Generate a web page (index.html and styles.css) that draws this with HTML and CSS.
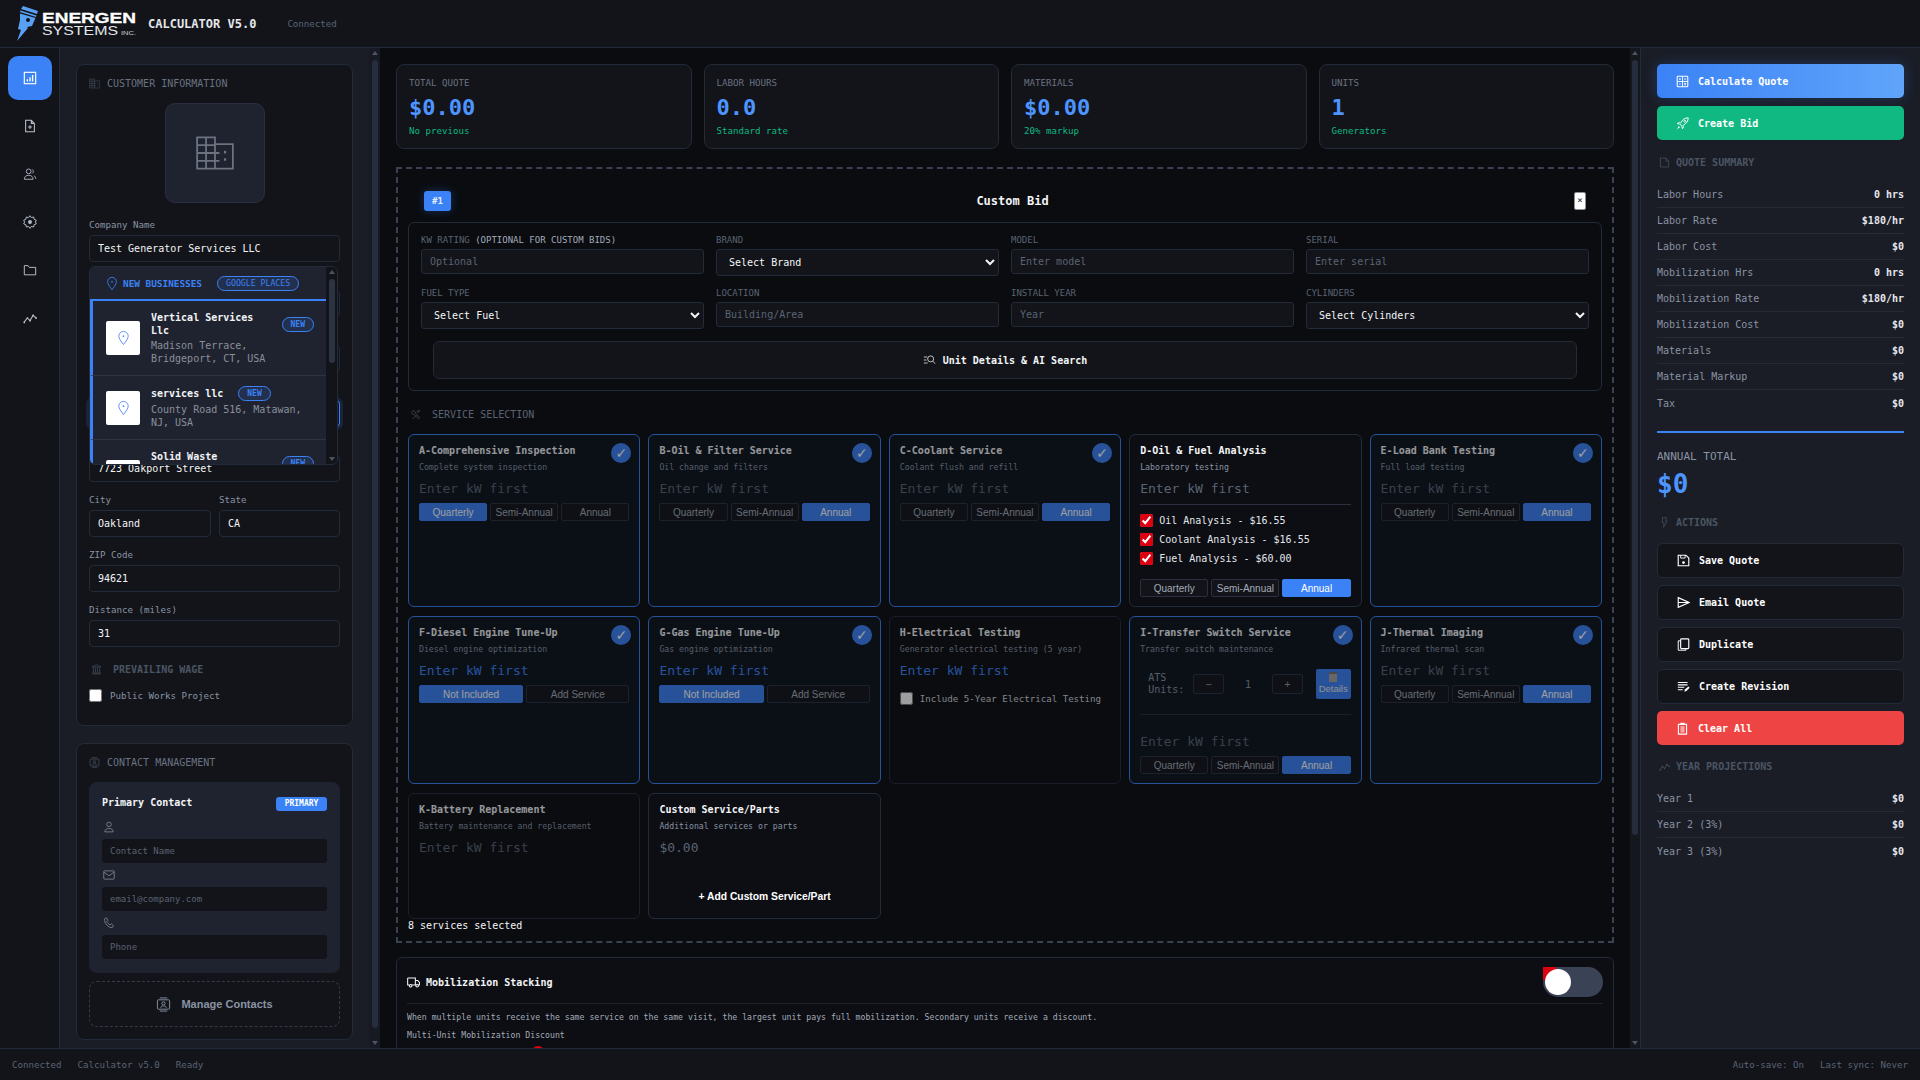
FILE: index.html
```html
<!DOCTYPE html>
<html lang="en">
<head>
<meta charset="utf-8">
<title>Energen Systems Calculator V5.0</title>
<link rel="stylesheet" href="styles.css">
</head>
<body>
<svg class="sprite" xmlns="http://www.w3.org/2000/svg">
  <symbol id="i-chart" viewBox="0 0 16 16"><rect x="1.5" y="1.5" width="13" height="13" stroke-width="1.3"/><path d="M5 12V9.5M8 12V7M11 12V4.5" stroke-width="1.6"/></symbol>
  <symbol id="i-file-plus" viewBox="0 0 16 16"><path d="M3 1.5h6.5l3.500 3.500v9.500H3zM9.500 1.500V5H13M8 7v4.500M5.800 9.200h4.400" stroke-width="1.200"/></symbol>
  <symbol id="i-people" viewBox="0 0 16 16"><circle cx="6.500" cy="5" r="2.700"/><path d="M1.500 14c0-3 2-4.500 5-4.500s5 1.500 5 4.500zM10.500 2.800a2.700 2.700 0 0 1 0 4.600M12.500 10c1.300.6 2 1.800 2 3.500"/></symbol>
  <symbol id="i-gear" viewBox="0 0 16 16"><path d="M8 .8l1.600 2.100 2.600-.6.500 2.600 2.500 1-1 2.100 1 2.100-2.500 1-.5 2.600-2.600-.6L8 15.200l-1.600-2.100-2.600.6-.5-2.600-2.500-1 1-2.100-1-2.100 2.500-1 .5-2.600 2.600.6z" stroke-width="1.100"/><circle cx="8" cy="8" r="2.200" class="solid"/></symbol>
  <symbol id="i-folder" viewBox="0 0 16 16"><path d="M1.500 13.500V3h4.300l1.500 2h7.200v8.500z" stroke-width="1.100"/></symbol>
  <symbol id="i-graph" viewBox="0 0 16 16"><path d="M1 13l4-5 3 3 3.500-6 3.500 3" stroke-width="1.200"/><g class="solid"><circle cx="1.500" cy="13" r="1"/><circle cx="5" cy="8" r="1"/><circle cx="8" cy="11" r="1"/><circle cx="11.500" cy="5" r="1"/><circle cx="15" cy="8" r="1"/></g></symbol>
  <symbol id="i-building" viewBox="0 0 17 15"><path d="M.5 14.500V.5h8v14zM8.500 3.500h8v11h-8M4.500.5v14M.5 4h8M.5 7.500h8M.5 11h8M8.500 7.500h2M8.500 11h2" stroke-width=".8"/><path d="M13 6.500v1.200M13 9.800V11" stroke-width="1"/></symbol>
  <symbol id="i-pin" viewBox="0 0 16 16"><path d="M8 15C5 11 3 8.500 3 6a5 5 0 0 1 10 0c0 2.500-2 5-5 9z"/><circle cx="8" cy="6" r="1" class="solid"/></symbol>
  <symbol id="i-bank" viewBox="0 0 16 16"><path d="M8 1l6.500 3.500h-13zM2 14.500h12M1.500 13h13M3.500 6v6M6.500 6v6M9.500 6v6M12.500 6v6"/></symbol>
  <symbol id="i-badge" viewBox="0 0 16 16"><rect x="1.500" y="3" width="13" height="10" rx="1"/><circle cx="8" cy="6.800" r="1.700"/><path d="M5 11.500c.3-1.500 1.400-2 3-2s2.700.5 3 2M4 1h8M4 15h8"/></symbol>
  <symbol id="i-person" viewBox="0 0 16 16"><circle cx="8" cy="4.500" r="3"/><path d="M2.500 14.500c0-3.500 2.500-4.500 5.500-4.500s5.500 1 5.500 4.500z"/></symbol>
  <symbol id="i-mail" viewBox="0 0 16 16"><rect x="1" y="2.500" width="14" height="11" rx="1"/><path d="M1 4l7 5 7-5"/></symbol>
  <symbol id="i-phone" viewBox="0 0 16 16"><path d="M2 2.500L4.500 1l2 3.500-1.500 1.500c.8 2 2.500 3.700 4.500 4.500l1.500-1.500 3 2.500-1.500 2.500C7.500 15 1.500 8.500 2 2.500z"/></symbol>
  <symbol id="i-searchlines" viewBox="0 0 16 16"><path d="M.5 4h4.500M.5 8h3.500M.5 12h5"/><circle cx="9.500" cy="6.500" r="4"/><path d="M12.500 9.500l3 3.500"/></symbol>
  <symbol id="i-tools" viewBox="0 0 16 16"><path d="M2 5.500L5 2l3 2.500-.8 1 6.800 7-1.800 1.800-6.800-7-1 .8z"/><path d="M9 9.500l-5 5M11 2.500c1-1 2.500-1 3.500 0L12 5l-1.500-.5z"/></symbol>
  <symbol id="i-truck" viewBox="0 0 16 16"><path d="M.8 2.500h9.500v8.500H6M3 11H.8V2.500M10.300 5.500h3l2 2.500v3h-1.500M10.300 11h1" stroke-width="1.300"/><circle cx="4.500" cy="12" r="1.600" stroke-width="1.300"/><circle cx="12.500" cy="12" r="1.600" stroke-width="1.300"/></symbol>
  <symbol id="i-calc" viewBox="0 0 16 16"><rect x="1.500" y="1.500" width="13" height="13" rx="1" stroke-width="1.300"/><path d="M8 1.500v13M1.500 8h13M3.800 5h2M4.800 4v2M10 5h2.500M3.800 11h2M10 10.300h2.500M10 12h2.500" stroke-width="1.100"/></symbol>
  <symbol id="i-rocket" viewBox="0 0 16 16"><path d="M15 1c-4 0-7 2-9 6L4.500 8.500l3 3L9 10c4-2 6-5 6-9z" stroke-width="1.200"/><path d="M4.500 6.500L1.500 8l2.500.8M9.500 11.500L8 14.500l-.8-2.500" stroke-width="1.200"/><circle cx="10.800" cy="5.200" r="1.200"/><path d="M3.500 11L1 15l4-2.500" class="solid"/></symbol>
  <symbol id="i-note" viewBox="0 0 16 16"><path d="M2 1.500h8l4 4v9H2zM10 1.500V6h4M2 4h1M2 8h1M2 12h1"/></symbol>
  <symbol id="i-bolt" viewBox="0 0 16 16"><path d="M5 1h6L9.500 5.500H12L6.500 15l1-6.500H5z"/></symbol>
  <symbol id="i-save" viewBox="0 0 16 16"><path d="M1.500 1.500H11l3.500 3.500v9.500h-13z" stroke-width="1.400"/><path d="M4.500 1.500V5h5.500V1.500" stroke-width="1.100"/><circle cx="8" cy="10.500" r="1.700" class="solid"/></symbol>
  <symbol id="i-send" viewBox="0 0 16 16"><path d="M1.500 2L15 8 1.500 14zM1.500 8H15" stroke-width="1.400"/></symbol>
  <symbol id="i-copy" viewBox="0 0 16 16"><rect x="4.500" y="1" width="10" height="12" rx="1" stroke-width="1.400"/><path d="M4.500 3.500H1.500v11.500H11v-2" stroke-width="1.200"/></symbol>
  <symbol id="i-revise" viewBox="0 0 16 16"><path d="M1 3h12M1 6h12M1 9h8M1 12h6" stroke-width="1.300"/><path d="M9 14.500l1-3 4-3.500 1.500 1.500-4 4z" class="solid"/></symbol>
  <symbol id="i-clip" viewBox="0 0 16 16"><path d="M3 3h10v12H3zM6 3V1.500h4V3" stroke-width="1.400"/><rect x="5.500" y="5" width="5" height="8" class="pink"/></symbol>
</svg>

<header class="topbar">
  <svg class="logo" viewBox="16 6 122 36" width="122" height="36" aria-label="Energen Systems Inc.">
    <g fill="#5aa0f2">
      <path d="M23 6l15 5-1 3-16-5z"/>
      <path d="M20.500 10.500l16 5-.5 1.500-16-5z"/>
      <path d="M20 13.500l15.500 4.500-3.500 8-5 1 1 1-11 13 4-11-3-1 2-9z"/>
    </g>
    <circle cx="28" cy="20" r="2" fill="#12141a"/>
    <text x="42" y="23" class="logo-main" textLength="94" lengthAdjust="spacingAndGlyphs">ENERGEN</text>
    <text x="42" y="35" class="logo-sub" textLength="76" lengthAdjust="spacingAndGlyphs">SYSTEMS</text>
    <text x="121" y="35" class="logo-inc" textLength="15" lengthAdjust="spacingAndGlyphs">INC.</text>
  </svg>
  <h1 class="app-title">CALCULATOR V5.0</h1>
  <span class="status-text">Connected</span>
</header>

<div class="workspace">
  <nav class="sidebar">
    <a class="nav-btn nav-btn--active"><svg class="ic ic-nav"><use href="#i-chart"/></svg></a>
    <a class="nav-btn"><svg class="ic ic-nav"><use href="#i-file-plus"/></svg></a>
    <a class="nav-btn"><svg class="ic ic-nav"><use href="#i-people"/></svg></a>
    <a class="nav-btn"><svg class="ic ic-nav"><use href="#i-gear"/></svg></a>
    <a class="nav-btn"><svg class="ic ic-nav"><use href="#i-folder"/></svg></a>
    <a class="nav-btn"><svg class="ic ic-nav"><use href="#i-graph"/></svg></a>
  </nav>

  <aside class="left">
    <div class="left-scroll">
      <section class="card">
        <div class="sec-title sec-title--card"><svg class="ic ic-sec"><use href="#i-building"/></svg>CUSTOMER INFORMATION</div>
        <div class="logo-box"><svg class="ic ic-big"><use href="#i-building"/></svg></div>

        <div class="field field--drop">
          <label class="lbl">Company Name</label>
          <input class="inp" value="Test Generator Services LLC">
          <div class="drop">
            <div class="drop-body">
              <div class="drop-head">
                <svg class="ic ic-drop"><use href="#i-pin"/></svg>
                <span class="drop-head-t">NEW BUSINESSES</span>
                <span class="pill pill--google">GOOGLE PLACES</span>
              </div>
              <div class="drop-item">
                <span class="drop-ico"><svg class="ic ic-pin"><use href="#i-pin"/></svg></span>
                <div class="drop-text">
                  <div class="drop-line"><strong class="drop-name">Vertical Services Llc</strong><span class="pill">NEW</span></div>
                  <div class="drop-addr">Madison Terrace, Bridgeport, CT, USA</div>
                </div>
              </div>
              <div class="drop-item">
                <span class="drop-ico"><svg class="ic ic-pin"><use href="#i-pin"/></svg></span>
                <div class="drop-text">
                  <div class="drop-line"><strong class="drop-name">services llc</strong><span class="pill">NEW</span></div>
                  <div class="drop-addr">County Road 516, Matawan, NJ, USA</div>
                </div>
              </div>
              <div class="drop-item">
                <span class="drop-ico"><svg class="ic ic-pin"><use href="#i-pin"/></svg></span>
                <div class="drop-text">
                  <div class="drop-line"><strong class="drop-name">Solid Waste Services</strong><span class="pill">NEW</span></div>
                  <div class="drop-addr">Main Street, Oakland, CA, USA</div>
                </div>
              </div>
            </div>
            <div class="vscroll vscroll--drop"><i class="arr arr--up"></i><b class="thumb thumb--drop"></b><i class="arr arr--down"></i></div>
          </div>
        </div>
        <div class="field"><label class="lbl">Contact</label><input class="inp"></div>
        <div class="field"><label class="lbl">Email</label><input class="inp"></div>
        <div class="field"><label class="lbl">Phone</label><input class="inp inp--focus"></div>
        <div class="field"><label class="lbl">Address</label><input class="inp" value="7723 Oakport Street"></div>
        <div class="field-row">
          <div class="field"><label class="lbl">City</label><input class="inp" value="Oakland"></div>
          <div class="field"><label class="lbl">State</label><input class="inp" value="CA"></div>
        </div>
        <div class="field"><label class="lbl">ZIP Code</label><input class="inp" value="94621"></div>
        <div class="field"><label class="lbl">Distance (miles)</label><input class="inp" value="31"></div>
        <div class="sec-title sec-title--wage"><svg class="ic ic-sec"><use href="#i-bank"/></svg>PREVAILING WAGE</div>
        <label class="check-line"><input type="checkbox" class="chk">Public Works Project</label>
      </section>

      <section class="card card--contacts">
        <div class="sec-title sec-title--card"><svg class="ic ic-sec"><use href="#i-badge"/></svg>CONTACT MANAGEMENT</div>
        <div class="contact">
          <div class="contact-head"><strong>Primary Contact</strong><span class="primary-tag">PRIMARY</span></div>
          <svg class="ic ic-contact"><use href="#i-person"/></svg>
          <input class="inp2" placeholder="Contact Name">
          <svg class="ic ic-contact"><use href="#i-mail"/></svg>
          <input class="inp2" placeholder="email@company.com">
          <svg class="ic ic-contact"><use href="#i-phone"/></svg>
          <input class="inp2" placeholder="Phone">
        </div>
        <button class="manage"><svg class="ic ic-manage"><use href="#i-badge"/></svg>Manage Contacts</button>
      </section>
    </div>
    <div class="vscroll vscroll--left"><i class="arr arr--up"></i><b class="thumb thumb--left"></b><i class="arr arr--down"></i></div>
  </aside>

  <main class="main">
    <div class="main-scroll">
      <div class="stats">
        <div class="stat"><div class="stat-l">TOTAL QUOTE</div><div class="stat-v">$0.00</div><div class="stat-s">No previous</div></div>
        <div class="stat"><div class="stat-l">LABOR HOURS</div><div class="stat-v">0.0</div><div class="stat-s">Standard rate</div></div>
        <div class="stat"><div class="stat-l">MATERIALS</div><div class="stat-v">$0.00</div><div class="stat-s">20% markup</div></div>
        <div class="stat"><div class="stat-l">UNITS</div><div class="stat-v">1</div><div class="stat-s">Generators</div></div>
      </div>

      <section class="bid">
        <div class="bid-head">
          <span class="bid-no">#1</span>
          <strong class="bid-title">Custom Bid</strong>
          <button class="bid-x">×</button>
        </div>
        <div class="unit">
          <div class="unit-grid">
            <div><label class="ulbl">KW RATING <span class="ulbl-hi">(OPTIONAL FOR CUSTOM BIDS)</span></label><input class="uinp" placeholder="Optional"></div>
            <div><label class="ulbl">BRAND</label><select class="usel"><option>Select Brand</option></select></div>
            <div><label class="ulbl">MODEL</label><input class="uinp" placeholder="Enter model"></div>
            <div><label class="ulbl">SERIAL</label><input class="uinp" placeholder="Enter serial"></div>
            <div><label class="ulbl">FUEL TYPE</label><select class="usel"><option>Select Fuel</option></select></div>
            <div><label class="ulbl">LOCATION</label><input class="uinp" placeholder="Building/Area"></div>
            <div><label class="ulbl">INSTALL YEAR</label><input class="uinp" placeholder="Year"></div>
            <div><label class="ulbl">CYLINDERS</label><select class="usel"><option>Select Cylinders</option></select></div>
          </div>
          <button class="ai-btn"><svg class="ic ic-ai"><use href="#i-searchlines"/></svg>Unit Details &amp; AI Search</button>
        </div>

        <div class="sec-title sec-title--svc"><svg class="ic ic-sec"><use href="#i-tools"/></svg>SERVICE SELECTION</div>

        <div class="svc-grid">
          <article class="svc svc--on">
            <span class="tick">✓</span>
            <h3 class="svc-t">A-Comprehensive Inspection</h3>
            <p class="svc-d">Complete system inspection</p>
            <div class="svc-p">Enter kW first</div>
            <div class="periods"><button class="per per--on">Quarterly</button><button class="per">Semi-Annual</button><button class="per">Annual</button></div>
          </article>
          <article class="svc svc--on">
            <span class="tick">✓</span>
            <h3 class="svc-t">B-Oil &amp; Filter Service</h3>
            <p class="svc-d">Oil change and filters</p>
            <div class="svc-p">Enter kW first</div>
            <div class="periods"><button class="per">Quarterly</button><button class="per">Semi-Annual</button><button class="per per--on">Annual</button></div>
          </article>
          <article class="svc svc--on">
            <span class="tick">✓</span>
            <h3 class="svc-t">C-Coolant Service</h3>
            <p class="svc-d">Coolant flush and refill</p>
            <div class="svc-p">Enter kW first</div>
            <div class="periods"><button class="per">Quarterly</button><button class="per">Semi-Annual</button><button class="per per--on">Annual</button></div>
          </article>
          <article class="svc svc--plain">
            <h3 class="svc-t">D-Oil &amp; Fuel Analysis</h3>
            <p class="svc-d">Laboratory testing</p>
            <div class="svc-p">Enter kW first</div>
            <div class="fluids">
              <label class="fluid"><input type="checkbox" class="chk chk--red" checked>Oil Analysis - $16.55</label>
              <label class="fluid"><input type="checkbox" class="chk chk--red" checked>Coolant Analysis - $16.55</label>
              <label class="fluid"><input type="checkbox" class="chk chk--red" checked>Fuel Analysis - $60.00</label>
            </div>
            <div class="periods"><button class="per">Quarterly</button><button class="per">Semi-Annual</button><button class="per per--on">Annual</button></div>
          </article>
          <article class="svc svc--on">
            <span class="tick">✓</span>
            <h3 class="svc-t">E-Load Bank Testing</h3>
            <p class="svc-d">Full load testing</p>
            <div class="svc-p">Enter kW first</div>
            <div class="periods"><button class="per">Quarterly</button><button class="per">Semi-Annual</button><button class="per per--on">Annual</button></div>
          </article>

          <article class="svc svc--on">
            <span class="tick">✓</span>
            <h3 class="svc-t">F-Diesel Engine Tune-Up</h3>
            <p class="svc-d">Diesel engine optimization</p>
            <div class="svc-p svc-p--blue">Enter kW first</div>
            <div class="periods periods--two"><button class="per per--on">Not Included</button><button class="per">Add Service</button></div>
          </article>
          <article class="svc svc--on">
            <span class="tick">✓</span>
            <h3 class="svc-t">G-Gas Engine Tune-Up</h3>
            <p class="svc-d">Gas engine optimization</p>
            <div class="svc-p svc-p--blue">Enter kW first</div>
            <div class="periods periods--two"><button class="per per--on">Not Included</button><button class="per">Add Service</button></div>
          </article>
          <article class="svc svc--off">
            <h3 class="svc-t">H-Electrical Testing</h3>
            <p class="svc-d">Generator electrical testing (5 year)</p>
            <div class="svc-p svc-p--blue">Enter kW first</div>
            <label class="five"><input type="checkbox" class="chk">Include 5-Year Electrical Testing</label>
          </article>
          <article class="svc svc--on">
            <span class="tick">✓</span>
            <h3 class="svc-t">I-Transfer Switch Service</h3>
            <p class="svc-d">Transfer switch maintenance</p>
            <div class="ats">
              <span class="ats-l">ATS Units:</span>
              <button class="ats-b">−</button>
              <span class="ats-n">1</span>
              <button class="ats-b">+</button>
              <button class="ats-d"><span class="ats-clip"></span>Details</button>
            </div>
            <div class="svc-p svc-p--ats">Enter kW first</div>
            <div class="periods"><button class="per">Quarterly</button><button class="per">Semi-Annual</button><button class="per per--on">Annual</button></div>
          </article>
          <article class="svc svc--on">
            <span class="tick">✓</span>
            <h3 class="svc-t">J-Thermal Imaging</h3>
            <p class="svc-d">Infrared thermal scan</p>
            <div class="svc-p">Enter kW first</div>
            <div class="periods"><button class="per">Quarterly</button><button class="per">Semi-Annual</button><button class="per per--on">Annual</button></div>
          </article>

          <article class="svc svc--off">
            <h3 class="svc-t">K-Battery Replacement</h3>
            <p class="svc-d">Battery maintenance and replacement</p>
            <div class="svc-p">Enter kW first</div>
          </article>
          <article class="svc svc--plain">
            <h3 class="svc-t">Custom Service/Parts</h3>
            <p class="svc-d">Additional services or parts</p>
            <div class="svc-p">$0.00</div>
            <button class="add-custom">+ Add Custom Service/Part</button>
          </article>
        </div>
        <div class="svc-count">8 services selected</div>
      </section>

      <section class="mob">
        <div class="mob-head">
          <div class="mob-title"><svg class="ic ic-truck"><use href="#i-truck"/></svg>Mobilization Stacking</div>
          <div class="toggle"><i class="toggle-chk"></i><i class="toggle-knob"></i></div>
        </div>
        <p class="mob-txt">When multiple units receive the same service on the same visit, the largest unit pays full mobilization. Secondary units receive a discount.</p>
        <p class="mob-txt mob-txt--l">Multi-Unit Mobilization Discount</p>
        <div class="mob-slider"><i class="mob-thumb"></i></div>
      </section>
    </div>
    <div class="vscroll vscroll--main"><i class="arr arr--up"></i><b class="thumb thumb--main"></b><i class="arr arr--down"></i></div>
  </main>

  <aside class="right">
    <button class="rbtn rbtn--calc"><svg class="ic ic-btn"><use href="#i-calc"/></svg>Calculate Quote</button>
    <button class="rbtn rbtn--bid"><svg class="ic ic-btn"><use href="#i-rocket"/></svg>Create Bid</button>

    <div class="sec-title sec-title--r"><svg class="ic ic-sec"><use href="#i-note"/></svg>QUOTE SUMMARY</div>
    <dl class="rows">
      <div class="row"><dt>Labor Hours</dt><dd>0 hrs</dd></div>
      <div class="row"><dt>Labor Rate</dt><dd>$180/hr</dd></div>
      <div class="row"><dt>Labor Cost</dt><dd>$0</dd></div>
      <div class="row"><dt>Mobilization Hrs</dt><dd>0 hrs</dd></div>
      <div class="row"><dt>Mobilization Rate</dt><dd>$180/hr</dd></div>
      <div class="row"><dt>Mobilization Cost</dt><dd>$0</dd></div>
      <div class="row"><dt>Materials</dt><dd>$0</dd></div>
      <div class="row"><dt>Material Markup</dt><dd>$0</dd></div>
      <div class="row"><dt>Tax</dt><dd>$0</dd></div>
    </dl>
    <div class="total">
      <div class="total-l">ANNUAL TOTAL</div>
      <div class="total-v">$0</div>
    </div>

    <div class="sec-title sec-title--r2"><svg class="ic ic-sec"><use href="#i-bolt"/></svg>ACTIONS</div>
    <div class="actions">
      <button class="act"><svg class="ic ic-btn"><use href="#i-save"/></svg>Save Quote</button>
      <button class="act"><svg class="ic ic-btn"><use href="#i-send"/></svg>Email Quote</button>
      <button class="act"><svg class="ic ic-btn"><use href="#i-copy"/></svg>Duplicate</button>
      <button class="act"><svg class="ic ic-btn"><use href="#i-revise"/></svg>Create Revision</button>
      <button class="rbtn rbtn--clear"><svg class="ic ic-btn"><use href="#i-clip"/></svg>Clear All</button>
    </div>

    <div class="sec-title sec-title--r3"><svg class="ic ic-sec"><use href="#i-graph"/></svg>YEAR PROJECTIONS</div>
    <dl class="rows">
      <div class="row"><dt>Year 1</dt><dd>$0</dd></div>
      <div class="row"><dt>Year 2 (3%)</dt><dd>$0</dd></div>
      <div class="row"><dt>Year 3 (3%)</dt><dd>$0</dd></div>
    </dl>
  </aside>
</div>

<footer class="foot">
  <div class="foot-side"><span>Connected</span><span>Calculator v5.0</span><span>Ready</span></div>
  <div class="foot-side"><span>Auto-save: On</span><span>Last sync: Never</span></div>
</footer>
</body>
</html>
```
FILE: styles.css
```css
* { box-sizing: border-box; }
html, body { margin: 0; height: 100%; }
body {
  height: 100vh;
  display: flex;
  flex-direction: column;
  overflow: hidden;
  background: #0a0c10;
  color: #f3f4f6;
  font-family: "DejaVu Sans Mono", "Liberation Mono", monospace;
  font-size: 10px;
}
button, input, select { font-family: inherit; }
.sprite { position: absolute; width: 0; height: 0; }

/* icons */
.ic { fill: none; stroke: currentColor; stroke-width: 1; flex: none; display: block; }
.solid { fill: currentColor; stroke: none; }
.pink { fill: #fca5a5; stroke: none; }
.ic-nav { width: 14px; height: 14px; color: #b8bec9; }
.ic-sec { width: 11px; height: 11px; color: #4b5563; }
.ic-big { width: 38px; height: 34px; color: #6b7280; }
.ic-drop { width: 14px; height: 15px; color: #3b82f6; }
.ic-pin { width: 15px; height: 16px; color: #5b8df6; }
.ic-contact { width: 12px; height: 12px; color: #8a93a3; margin-left: 1px; }
.ic-manage { width: 15px; height: 15px; }
.ic-ai { width: 13px; height: 12px; }
.ic-truck { width: 13px; height: 13px; }
.ic-btn { width: 13px; height: 13px; }

/* top bar */
.topbar {
  height: 48px;
  flex: none;
  display: flex;
  align-items: center;
  padding-left: 16px;
  background: #12141a;
  border-bottom: 1px solid #232a38;
}
.logo { flex: none; margin-top: 1px; }
.logo-main { font: bold 14px "Liberation Sans", sans-serif; fill: #fff; stroke: #fff; stroke-width: .3px; }
.logo-sub { font: 12px "Liberation Sans", sans-serif; fill: #e5e7eb; }
.logo-inc { font: 6px "Liberation Sans", sans-serif; fill: #d1d5db; }
.app-title { margin: 0 0 0 10px; font-size: 12px; font-weight: bold; color: #e5e7eb; }
.status-text { margin-left: 31px; font-size: 9.150px; color: #5b6372; }

.workspace { flex: 1; min-height: 0; display: flex; }

/* sidebar */
.sidebar {
  width: 60px;
  flex: none;
  padding: 8px 8px;
  display: flex;
  flex-direction: column;
  gap: 4px;
  background: #12141a;
  border-right: 1px solid #232a38;
}
.nav-btn {
  width: 44px;
  height: 44px;
  border-radius: 10px;
  display: flex;
  align-items: center;
  justify-content: center;
}
.nav-btn--active { background: #3b82f6; }
.nav-btn--active .ic-nav { color: #fff; }

/* left panel */
.left { width: 320px; flex: none; display: flex; background: #1a1d26; }
.left-scroll { flex: 1; min-width: 0; overflow: hidden; padding: 16px; }
.card {
  background: #12141a;
  border: 1px solid #232a38;
  border-radius: 8px;
  padding: 12px;
}
.card--contacts { margin-top: 17px; }
.sec-title {
  height: 14px;
  margin-bottom: 12px;
  display: flex;
  align-items: center;
  gap: 6px;
  font-size: 10px;
  font-weight: bold;
  color: #4b5563;
  white-space: nowrap;
}
.sec-title--card { font-weight: normal; color: #6b7280; gap: 7px; margin-top: -1px; margin-bottom: 13px; }
.logo-box {
  width: 100px;
  height: 100px;
  margin: 0 auto 16px;
  border-radius: 10px;
  background: #1f2330;
  border: 1px solid #2a3040;
  display: flex;
  align-items: center;
  justify-content: center;
}
.field { margin-bottom: 12px; min-width: 0; }
.field--drop { position: relative; }
.lbl { display: block; height: 12px; line-height: 12px; margin-bottom: 4px; font-size: 9.150px; color: #8a93a3; }
.inp {
  display: block;
  width: 100%;
  height: 27px;
  padding: 0 8px;
  background: #12141a;
  border: 1px solid #232a38;
  border-radius: 4px;
  color: #f3f4f6;
  font-size: 10px;
  outline: none;
}
.inp--focus { border-color: #3b82f6; box-shadow: 0 0 0 3px rgba(59,130,246,.15); }
.field-row { display: grid; grid-template-columns: 122px 1fr; gap: 8px; }

.drop {
  position: absolute;
  left: 0;
  top: 47px;
  width: 249px;
  height: 199px;
  display: flex;
  background: #1f2330;
  border: 1px solid #232a38;
  border-radius: 6px;
  overflow: hidden;
  z-index: 5;
}
.drop-body { flex: 1; min-width: 0; overflow: hidden; }
.drop-head {
  height: 34px;
  padding-left: 15px;
  display: flex;
  align-items: center;
  border-bottom: 2px solid #3b82f6;
  background: #1f2330;
}
.drop-head-t { margin-left: 4px; margin-right: 15px; font-size: 9.400px; font-weight: bold; color: #3b82f6; white-space: nowrap; }
.pill {
  flex: none;
  height: 15px;
  padding: 0 8px;
  display: inline-flex;
  align-items: center;
  border: 1px solid #3b82f6;
  border-radius: 8px;
  background: rgba(59,130,246,.15);
  font-size: 8px;
  font-weight: bold;
  color: #3b82f6;
}
.pill--google { font-size: 8.200px; font-weight: normal; }
.drop-item {
  display: flex;
  align-items: center;
  gap: 11px;
  padding: 10px 12px 10px 13px;
  border-left: 3px solid #3b82f6;
  border-bottom: 1px solid #2e3342;
}
.drop-ico {
  width: 34px;
  height: 34px;
  flex: none;
  border-radius: 2px;
  background: #fff;
  display: flex;
  align-items: center;
  justify-content: center;
}
.drop-text { flex: 1; min-width: 0; }
.drop-line { display: flex; gap: 15px; align-items: center; margin-bottom: 2px; }
.drop-name { font-size: 10px; line-height: 13px; color: #f3f4f6; }
.drop-addr { font-size: 10px; line-height: 13px; color: #8a8f9a; }

.vscroll { flex: none; display: flex; flex-direction: column; align-items: center; }
.vscroll--left { width: 11px; background: #171a22; }
.vscroll--main { width: 10px; background: #14171e; }
.vscroll--drop { width: 11px; background: #12141a; }
.arr { width: 0; height: 0; border-left: 3px solid transparent; border-right: 3px solid transparent; flex: none; }
.arr--up { margin-top: 3px; border-bottom: 4px solid #4b5563; }
.arr--down { margin-top: auto; margin-bottom: 3px; border-top: 4px solid #4b5563; }
.thumb { display: block; width: 6px; margin-top: 5px; background: #262d3c; border-radius: 3px; }
.thumb--left { height: 968px; }
.thumb--main { height: 775px; }
.thumb--drop { height: 84px; background: #2c3342; }

.sec-title--wage { gap: 11px; margin: 15px 0 13px 2px; }
.check-line { display: flex; align-items: center; gap: 8px; margin-bottom: 11px; font-size: 9.150px; color: #8a93a3; height: 13px; }
.chk { width: 13px; height: 13px; margin: 0; flex: none; accent-color: #dc0011; }

.contact {
  padding: 13px;
  height: 191px;
  background: #1f2330;
  border-radius: 8px;
}
.contact-head { display: flex; justify-content: space-between; align-items: center; height: 14px; margin-bottom: 12px; font-size: 10px; }
.primary-tag {
  width: 51px;
  height: 14px;
  display: flex;
  align-items: center;
  justify-content: center;
  margin-top: 3px;
  background: #3b82f6;
  border-radius: 3px;
  font-size: 8px;
  font-weight: bold;
  color: #fff;
}
.inp2 {
  display: block;
  width: 100%;
  height: 24px;
  margin: 6px 0;
  padding: 0 8px;
  background: #12141a;
  border: 0;
  border-radius: 3px;
  font-size: 9px;
  color: #f3f4f6;
}
.inp2::placeholder, .uinp::placeholder { color: #5b6372; opacity: 1; }
.manage {
  width: 100%;
  height: 46px;
  margin-top: 8px;
  display: flex;
  align-items: center;
  justify-content: center;
  gap: 10px;
  background: transparent;
  border: 1px dashed #333b4b;
  border-radius: 8px;
  font: bold 11px "Liberation Sans", sans-serif;
  color: #8a93a3;
}

/* main */
.main { flex: 1; min-width: 0; display: flex; background: #0a0c10; }
.main-scroll { flex: 1; min-width: 0; overflow: hidden; padding: 16px; }
.stats { display: grid; grid-template-columns: repeat(4, 1fr); gap: 12px; margin-bottom: 18px; }
.stat {
  height: 85px;
  padding: 12px;
  background: #12141a;
  border: 1px solid #232a38;
  border-radius: 8px;
}
.stat-l { font-size: 9.150px; line-height: 12px; color: #6b7280; }
.stat-v { margin: 6px 0 4px; font-size: 22px; line-height: 26px; font-weight: bold; color: #4d94ff; }
.stat-s { font-size: 9.150px; line-height: 12px; color: #10b981; }

.bid { padding: 10px; border: 2px dashed #3a4150; height: 776px; }
.bid-head { display: flex; justify-content: space-between; align-items: center; height: 43px; padding: 0 16px; }
.bid-no {
  width: 27px;
  height: 20px;
  display: flex;
  align-items: center;
  justify-content: center;
  background: #3b82f6;
  border-radius: 3px;
  font-size: 9px;
  font-weight: bold;
  color: #e5edff;
  box-shadow: 0 0 10px rgba(59,130,246,.3);
}
.bid-title { font-size: 12px; color: #f3f4f6; }
.bid-x {
  width: 12px;
  height: 18px;
  padding: 0;
  background: #fff;
  border: 1px solid #8a8f9a;
  border-radius: 2px;
  font-size: 9px;
  line-height: 1;
  color: #12141a;
}
.unit { height: 169px; padding: 12px; border: 1px solid #232a38; border-radius: 6px; }
.unit-grid { display: grid; grid-template-columns: repeat(4, 1fr); gap: 12px; align-items: start; }
.ulbl { display: block; height: 10px; line-height: 10px; margin-bottom: 4px; font-size: 9px; color: #5b6372; white-space: nowrap; }
.ulbl-hi { color: #a4abb8; }
.uinp, .usel {
  display: block;
  width: 100%;
  background: #12141a;
  border: 1px solid #232a38;
  border-radius: 3px;
  font-size: 10px;
  color: #f3f4f6;
}
.uinp { height: 24.500px; padding: 0 8px; }
.usel { height: 27px; padding: 0 8px; color-scheme: dark; }
.ai-btn {
  width: calc(100% - 24px);
  height: 38px;
  margin: 12px 12px 0;
  display: flex;
  align-items: center;
  justify-content: center;
  gap: 7px;
  background: #12141a;
  border: 1px solid #232a38;
  border-radius: 6px;
  font-size: 10px;
  font-weight: bold;
  color: #f3f4f6;
}
.sec-title--svc { margin: 16px 0 13px 2px; gap: 11px; font-weight: normal; color: #5b6372; }

.svc-grid { display: grid; grid-template-columns: repeat(5, 1fr); gap: 9px 8px; }
.svc {
  position: relative;
  display: flex;
  flex-direction: column;
  padding: 10px 10px 9px;
  border: 1px solid #232a38;
  border-radius: 6px;
  min-width: 0;
}
.svc--plain { background: #0c0e13; }
.svc--off { opacity: .6; background: #0a0c10; }
.svc--on { opacity: .6; border: 1px solid #3b82f6; background: rgba(59,130,246,.06); }
.tick {
  position: absolute;
  top: 8px;
  right: 8px;
  width: 20px;
  height: 20px;
  border-radius: 50%;
  background: #3b82f6;
  display: flex;
  align-items: center;
  justify-content: center;
  font: 14px "DejaVu Sans", sans-serif;
  color: #fff;
}
.svc-t { margin: 0 0 4px; font-size: 10px; line-height: 12px; font-weight: bold; color: #f3f4f6; }
.svc-d { margin: 0 0 8px; font-size: 8.200px; line-height: 12px; color: #8a93a3; }
.svc-p { margin-bottom: 7px; font-size: 13px; line-height: 15px; color: #5b6372; }
.svc-p--blue { color: #3b82f6; }
.svc-p--ats { margin-top: 19px; margin-bottom: 7px; }
.periods { display: flex; gap: 3px; }
.per {
  flex: 1 1 0;
  min-width: 0;
  height: 18px;
  padding: 0;
  background: #12141a;
  border: 1px solid #2a3040;
  border-radius: 2px;
  font: 10px "Liberation Sans", sans-serif;
  color: #a4abb8;
  white-space: nowrap;
}
.per--on { background: #3b82f6; border-color: #3b82f6; color: #fff; }
.periods--two .per:first-child { flex: 1.01 1 0; }
.fluids { margin: 1px 0 14px; padding-top: 9px; border-top: 1px solid #2a3040; display: flex; flex-direction: column; gap: 6px; }
.fluid { display: flex; align-items: center; gap: 6px; height: 13px; font-size: 10px; color: #e5e7eb; }
.five { display: flex; align-items: center; gap: 7px; margin-top: 7px; font-size: 9.150px; color: #d1d5db; white-space: nowrap; }
.ats {
  display: flex;
  align-items: center;
  height: 53px;
  padding: 0 0 8px 8px;
  margin-top: -1px;
  border-bottom: 1px solid #232a38;
  color: #8a93a3;
}
.ats-l { width: 45px; flex: none; font-size: 10px; line-height: 12px; }
.ats-b { width: 31px; height: 20px; padding: 0; background: #12141a; border: 1px solid #2a3040; border-radius: 2px; color: #8a93a3; font-size: 10px; }
.ats-n { width: 48px; flex: none; text-align: center; font-size: 10px; }
.ats-d {
  width: 35px;
  height: 30px;
  margin-left: 13px;
  padding: 0;
  display: flex;
  flex-direction: column;
  align-items: center;
  gap: 1px;
  background: #3b82f6;
  border: 0;
  border-radius: 2px;
  font: 9.500px/11px "Liberation Sans", sans-serif;
  color: #e5e7eb;
}
.ats-clip { width: 8px; height: 10px; margin-top: 3px; background: #a3a3a3; border-top: 2px solid #78716c; }
.add-custom {
  height: 23px;
  margin-top: 23px;
  margin-bottom: 1px;
  background: transparent;
  border: 0;
  font: bold 10.300px "Liberation Sans", sans-serif;
  color: #fff;
}
.svc-count { margin-top: 1px; font-size: 10px; line-height: 12px; color: #f3f4f6; }

.mob {
  margin-top: 14px;
  padding: 9px 10px;
  background: #0c0e13;
  border: 1px solid #232a38;
  border-radius: 6px;
}
.mob-head { display: flex; justify-content: space-between; align-items: center; height: 37px; padding-bottom: 6px; border-bottom: 1px solid #1c212c; }
.mob-title { display: flex; align-items: center; gap: 6px; font-size: 10px; font-weight: bold; color: #f3f4f6; }
.toggle { position: relative; width: 60px; height: 30px; border-radius: 15px; background: #3a4356; }
.toggle-chk { position: absolute; left: 0; top: 0; width: 13px; height: 13px; background: #dc0011; }
.toggle-knob { position: absolute; left: 2px; top: 2px; width: 26px; height: 26px; border-radius: 50%; background: #fff; }
.mob-txt { margin: 7px 0 0; font-size: 8.200px; line-height: 12px; color: #a4abb8; white-space: nowrap; }
.mob-txt--l { margin-top: 6px; }
.mob-slider { width: 138px; height: 14px; margin-top: 5px; display: flex; justify-content: flex-end; }
.mob-thumb { width: 14px; height: 14px; border-radius: 50%; background: #dc0011; }

/* right panel */
.right {
  width: 280px;
  flex: none;
  padding: 16px 16px 0;
  background: #1a1d26;
  border-left: 1px solid #232a38;
  overflow: hidden;
}
.rbtn, .act {
  width: 100%;
  display: flex;
  align-items: center;
  gap: 9px;
  font-size: 10px;
  font-weight: bold;
  color: #fff;
}
.rbtn { height: 34px; padding: 0 19px; border: 0; border-radius: 5px; }
.rbtn--calc { background: linear-gradient(90deg, #3b82f6, #60a5fa); box-shadow: 0 0 14px rgba(59,130,246,.25); }
.rbtn--bid { margin-top: 8px; background: #10b981; }
.rbtn--clear { background: #ef4444; }
.sec-title--r { margin: 15px 0 13px 2px; }
.sec-title--r2 { margin: 15px 0 14px 2px; }
.sec-title--r3 { margin: 14px 0 13px 2px; }
.rows { margin: 0; }
.row { height: 26px; display: flex; align-items: center; justify-content: space-between; border-bottom: 1px solid #252a36; font-size: 10px; }
.row:last-child { border-bottom: 0; }
.row dt { color: #8a93a3; }
.row dd { margin: 0; font-weight: bold; color: #e5e7eb; }
.total { margin-top: 15px; padding-top: 17px; border-top: 2px solid #3b82f6; }
.total-l { font-size: 11px; line-height: 14px; color: #8a93a3; }
.total-v { margin-top: 4px; font-size: 26px; line-height: 32px; font-weight: bold; color: #4d94ff; }
.actions { display: flex; flex-direction: column; gap: 7px; }
.act { height: 35px; padding: 0 19px; background: #12141a; border: 1px solid #232a38; border-radius: 6px; }

/* footer */
.foot {
  height: 32px;
  flex: none;
  display: flex;
  justify-content: space-between;
  align-items: center;
  padding: 0 12px;
  background: #12141a;
  border-top: 1px solid #232a38;
  font-size: 9.150px;
  color: #5b6372;
}
.foot-side { display: flex; gap: 16px; }
```
